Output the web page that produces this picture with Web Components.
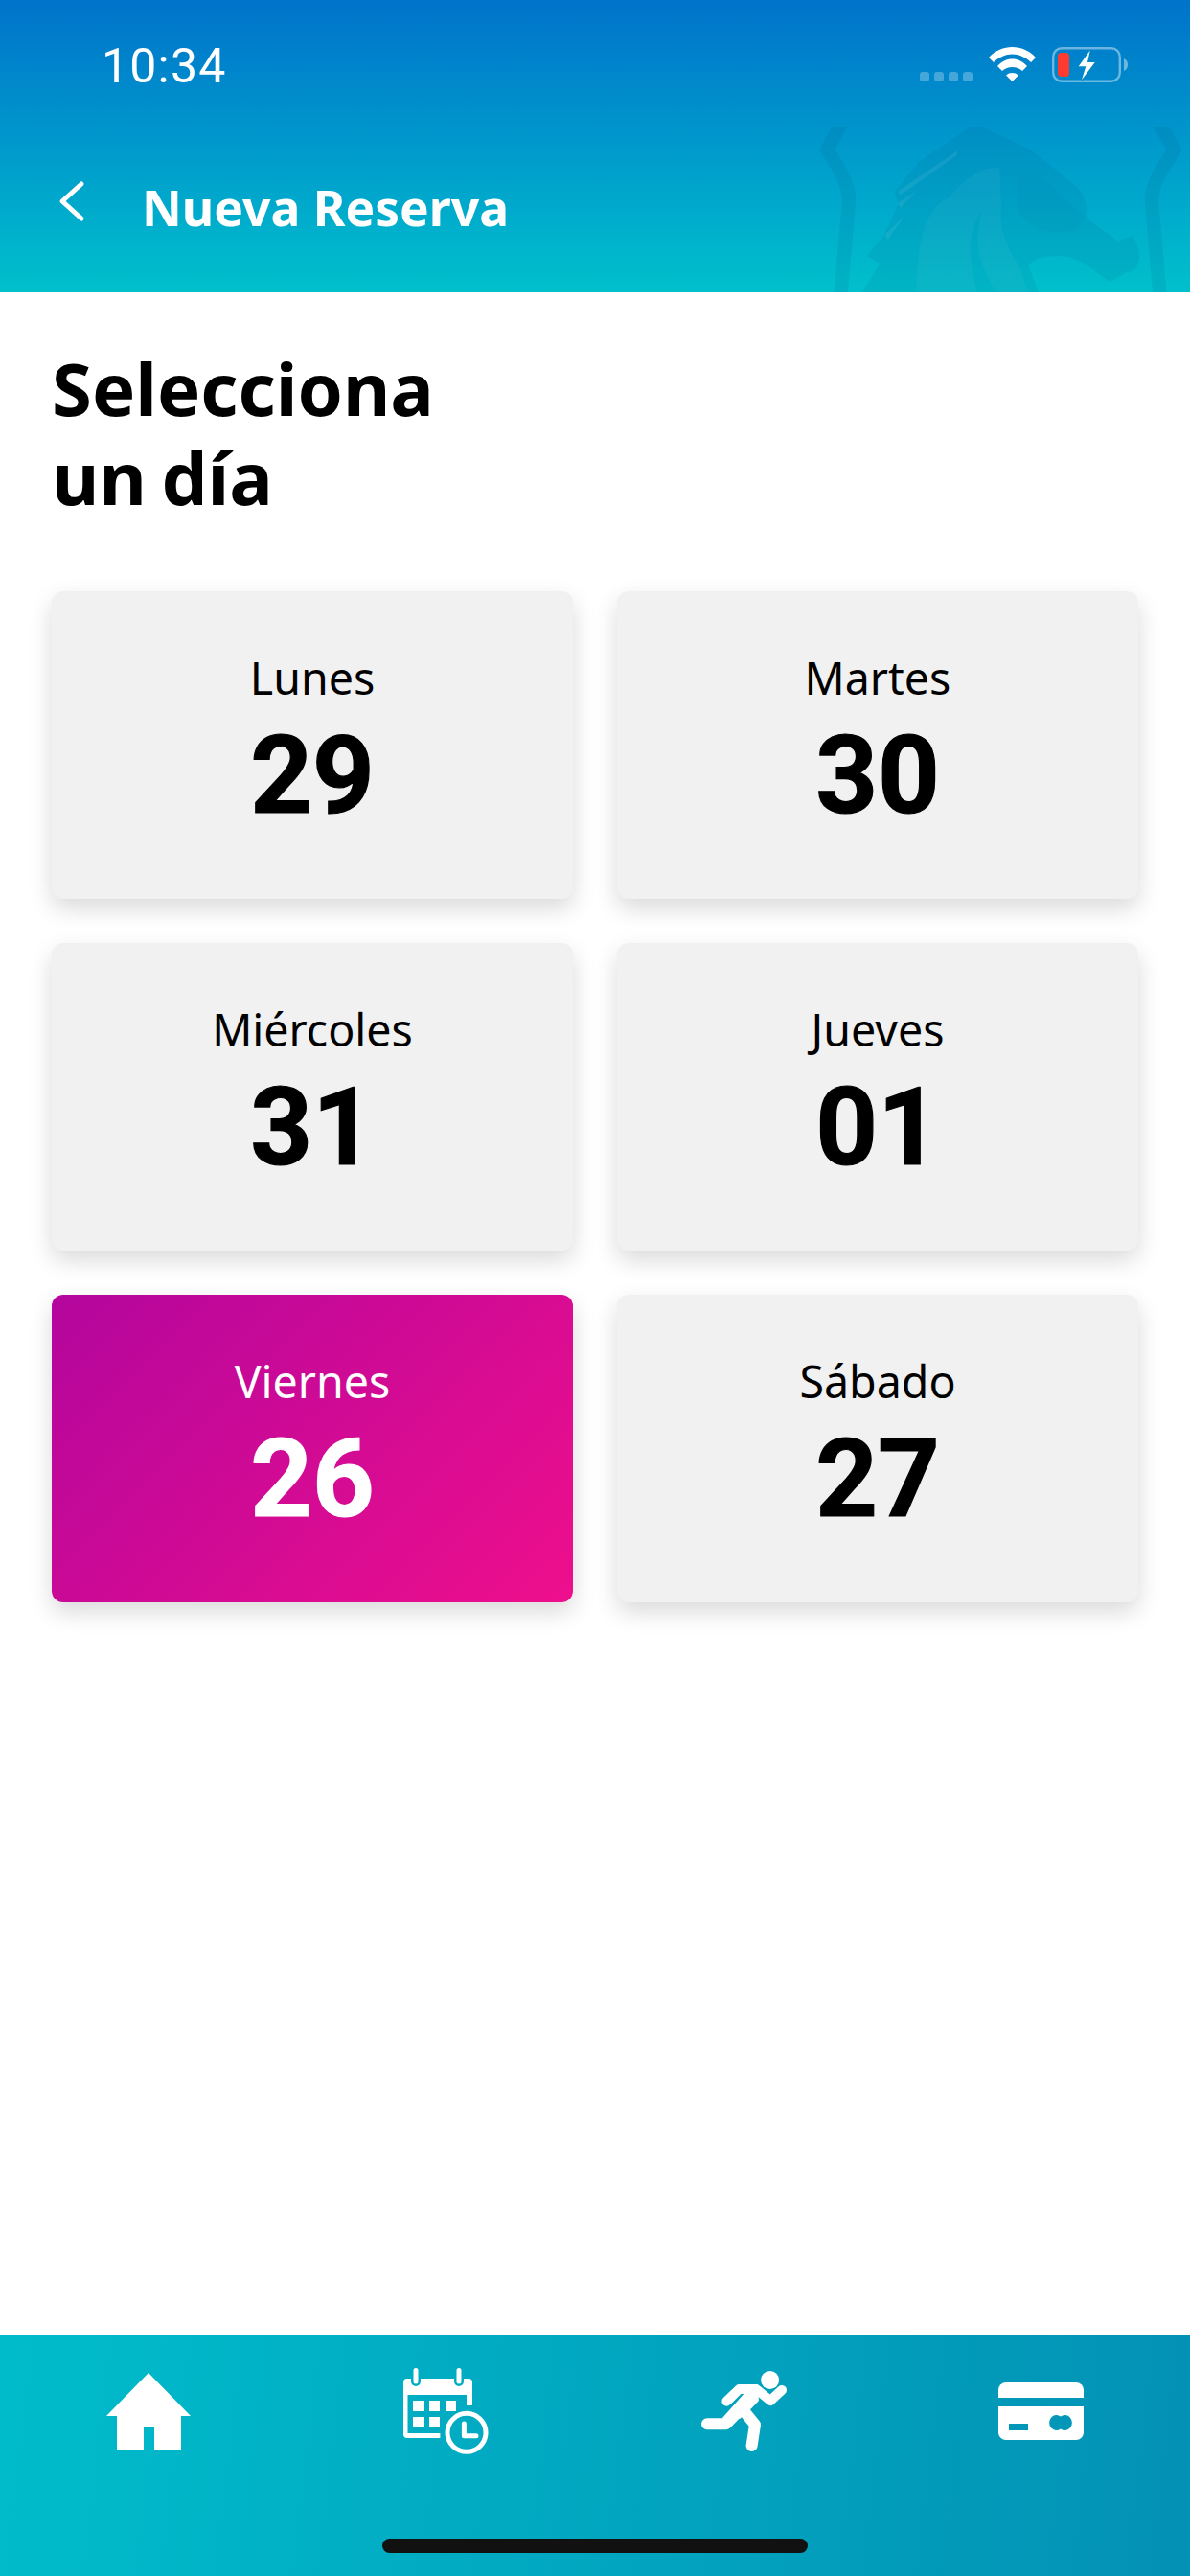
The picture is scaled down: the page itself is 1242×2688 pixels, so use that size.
<!DOCTYPE html>
<html lang="es">
<head>
<meta charset="utf-8">
<title>Nueva Reserva</title>
<style>
  html, body { margin: 0; padding: 0; background: #fff; }
  body { font-family: "Noto Sans", sans-serif; }
  app-screen { height: 2688px; }
</style>
</head>
<body>
<app-screen>
  <app-header slot="top" heading="Nueva Reserva"></app-header>
  <section-title>Selecciona<br>un día</section-title>
  <day-grid>
    <day-card><span slot="label">Lunes</span>29</day-card>
    <day-card><span slot="label">Martes</span>30</day-card>
    <day-card><span slot="label">Miércoles</span>31</day-card>
    <day-card><span slot="label">Jueves</span>01</day-card>
    <day-card selected><span slot="label">Viernes</span>26</day-card>
    <day-card><span slot="label">Sábado</span>27</day-card>
  </day-grid>
  <tab-bar slot="bottom"></tab-bar>
</app-screen>

<script>
class AppScreen extends HTMLElement {
  constructor() {
    super();
    this.attachShadow({ mode: "open" });
    this.shadowRoot.innerHTML = `
    <style>
      :host { display: flex; flex-direction: column; width: 1242px; background: #fff; }
      main { flex: 1; display: flex; flex-direction: column; }
    </style>
    <slot name="top"></slot>
    <main><slot></slot></main>
    <slot name="bottom"></slot>
  `;
  }
}

class StatusBar extends HTMLElement {
  constructor() {
    super();
    this.attachShadow({ mode: "open" });
    this.shadowRoot.innerHTML = `
    <style>
      :host { display: flex; align-items: flex-start; height: 132px; box-sizing: border-box; padding: 40px 65px 0 106px; color: #fff; }
      .time { font: 400 50px/58px Roboto, sans-serif; letter-spacing: 1.2px; }
      .right { margin-left: auto; display: flex; align-items: flex-start; padding-top: 9px; }
      .dots { display: flex; gap: 5px; margin: 26px 17px 0 0; }
      .dots i { width: 10px; height: 10px; border-radius: 3px; background: rgba(255,255,255,.27); }
      svg { display: block; }
      .wifi { margin-right: 17px; }
    </style>
    <span class="time">10:34</span>
    <div class="right">
      <div class="dots"><i></i><i></i><i></i><i></i></div>
      <svg class="wifi" width="49" height="36" viewBox="0 0 49 36" fill="#fff">
        <path d="M24.5 0C33.5 0 42 3.5 49 11L44 16C38 10.5 31.5 7.5 24.5 7.5C17.5 7.5 11 10.5 5 16L0 11C7 3.5 15.5 0 24.5 0Z"/>
        <path d="M24.5 12.5C30.5 12.5 35.5 15 40 20L35 25C32 22.5 28.5 21 24.5 21C20.5 21 17 22.5 14 25L9 20C13.5 15 18.5 12.5 24.5 12.5Z"/>
        <path d="M18 29.5C20 27.8 22 27 24.5 27C27 27 29 27.8 31 29.5L24.5 36Z"/>
      </svg>
      <svg width="79" height="37" viewBox="0 0 79 37">
        <rect x="1.2" y="1.2" width="69.6" height="34.6" rx="9" fill="none" stroke="#fff" stroke-opacity=".42" stroke-width="2.4"/>
        <path d="M75 12C77.5 13 79 15.5 79 18.5C79 21.5 77.5 24 75 25Z" fill="#fff" fill-opacity=".42"/>
        <rect x="6" y="6" width="12" height="25" rx="4" fill="#ff3b30"/>
        <path d="M39.7 3.7L27.7 20.3H35.3L31 34.3L44.7 16H37Z" fill="#fff" stroke="#0288c5" stroke-width="2.4" paint-order="stroke"/>
      </svg>
    </div>
  `;
  }
}

class HorseMark extends HTMLElement {
  constructor() {
    super();
    this.attachShadow({ mode: "open" });
    this.shadowRoot.innerHTML = `
    <style>
      :host { display: block; position: absolute; left: 780px; top: 0; width: 462px; height: 305px; pointer-events: none; }
      svg { display: block; }
    </style>
    <svg width="462" height="305" viewBox="0 0 1386 915">
      <defs>
        <clipPath id="band"><rect x="0" y="396" width="1386" height="519"/></clipPath>
      </defs>
      <g clip-path="url(#band)">
        <g fill="none" stroke="#005c86" stroke-opacity=".12" stroke-width="43" stroke-linejoin="round">
          <path d="M298 380L250 468C280 520 318 565 318 630L292 930"/>
          <path d="M1285 380L1338 468C1308 520 1266 565 1266 630L1292 930"/>
        </g>
        <path fill="#005c86" fill-opacity=".11" d="M700 396L540 505L460 600L472 640L425 740L375 800L415 825L360 915H912L880 830C900 805 950 795 1010 805C1060 820 1100 860 1130 880C1160 880 1170 850 1205 850C1230 830 1240 790 1205 738L1160 755L1060 680C1065 640 1060 610 1020 575C970 535 930 500 880 465L730 396Z"/>
        <g fill="#fff" fill-opacity=".07">
          <path d="M470 600L660 470L655 487L480 610Z"/>
          <path d="M470 635L530 598L480 650Z"/>
          <path d="M430 735L490 678L440 750Z"/>
        </g>
        <path fill="#fff" fill-opacity=".04" d="M530 915C525 780 560 640 630 620C680 560 730 520 790 525L795 640C790 700 800 760 850 830L880 915H780C740 850 700 780 735 660C690 720 690 800 720 915Z"/>
        <path fill="#005c86" fill-opacity=".05" d="M845 560C900 540 960 570 975 610L1060 680L1030 720C960 740 880 720 850 660Z"/>
      </g>
    </svg>
  `;
  }
}

class AppHeader extends HTMLElement {
  constructor() {
    super();
    this.attachShadow({ mode: "open" });
    this.shadowRoot.innerHTML = `
    <style>
      :host { display: block; position: relative; height: 305px; overflow: hidden; background: linear-gradient(180deg, #0073cb 0%, #00c0cc 100%); color: #fff; }
      nav { position: relative; display: flex; align-items: center; height: 70px; margin-top: 49px; padding-left: 60px; }
      svg { display: block; margin: 6px 58px 0 0; align-self: flex-start; }
      h1 { margin: 0; font: 700 51.5px/70px "Noto Sans", sans-serif; }
    </style>
    <horse-mark></horse-mark>
    <status-bar></status-bar>
    <nav>
      <svg width="30" height="46" viewBox="0 0 30 46" fill="none" stroke="#fff" stroke-width="5" stroke-linecap="round" stroke-linejoin="round">
        <path d="M25 5L5 23L25 41"/>
      </svg>
      <h1></h1>
    </nav>
  `;
    this.shadowRoot.querySelector("h1").textContent = this.getAttribute("heading") || "Nueva Reserva";
  }
}

class SectionTitle extends HTMLElement {
  constructor() {
    super();
    this.attachShadow({ mode: "open" });
    this.shadowRoot.innerHTML = `
    <style>
      :host { display: block; height: 312px; box-sizing: border-box; padding: 53px 0 0 54px; font: 700 76px/93px "Noto Sans", sans-serif; word-spacing: -4px; color: #000; }
    </style>
    <slot></slot>
  `;
  }
}

class DayGrid extends HTMLElement {
  constructor() {
    super();
    this.attachShadow({ mode: "open" });
    this.shadowRoot.innerHTML = `
    <style>
      :host { display: grid; grid-template-columns: 544px 544px; grid-auto-rows: 321px; gap: 46px; padding: 0 54px; }
    </style>
    <slot></slot>
  `;
  }
}

class DayCard extends HTMLElement {
  constructor() {
    super();
    this.attachShadow({ mode: "open" });
    this.shadowRoot.innerHTML = `
    <style>
      :host { display: flex; flex-direction: column; align-items: center; box-sizing: border-box; padding-top: 60px; border-radius: 12px; background: #f1f1f2; color: #000; box-shadow: 0 10px 24px rgba(0,0,0,.15); }
      :host([selected]) { background: linear-gradient(135deg, #b4069d 0%, #ee0f8c 100%); color: #fff; }
      .label { font: 400 46.5px/60px "Noto Sans", sans-serif; }
      .num { font: 700 113px/118px Roboto, sans-serif; margin-top: 14px; -webkit-text-stroke: 1.2px currentColor; }
    </style>
    <div class="label"><slot name="label"></slot></div>
    <div class="num"><slot></slot></div>
  `;
  }
}

class TabBar extends HTMLElement {
  constructor() {
    super();
    this.attachShadow({ mode: "open" });
    this.shadowRoot.innerHTML = `
    <style>
      :host { display: block; position: relative; height: 252px; background: linear-gradient(97deg, #00bccb 0%, #0391b5 100%); }
      .tabs { display: grid; grid-template-columns: repeat(4, 1fr); height: 160px; align-items: center; }
      .tabs > div { display: flex; justify-content: center; }
      svg { display: block; }
      .indicator { position: absolute; left: 399px; top: 213px; width: 444px; height: 15px; border-radius: 8px; background: #111; }
    </style>
    <div class="tabs">
      <div><svg width="88" height="80" viewBox="0 0 88 80" fill="#fff">
        <path d="M44 0L88 45H78V80H50V57H39V80H11V45H0Z"/>
      </svg></div>
      <div><svg width="89" height="90" viewBox="0 0 89 90">
        <path fill="#fff" d="M4 11H8V14A5 5 0 0 0 18 14V11H53V14A5 5 0 0 0 63 14V11H68A4 4 0 0 1 72 15V39H66V28H4.5V68H38.4V73H4A4 4 0 0 1 0 69V15A4 4 0 0 1 4 11Z"/>
        <path stroke="#fff" stroke-width="5" stroke-linecap="round" d="M13 2.5V14M58 2.5V14" fill="none"/>
        <path fill="#fff" d="M10 34H22V45H10ZM27 34H38V45H27ZM44 34H55V45H44ZM10 51H22V62H10ZM27 51H38V62H27Z"/>
        <circle cx="66" cy="67.3" r="20" fill="none" stroke="#fff" stroke-width="5"/>
        <path d="M63.4 58V70.7H76" fill="none" stroke="#fff" stroke-width="5" stroke-linecap="round" stroke-linejoin="round"/>
      </svg></div>
      <div><svg width="89" height="84" viewBox="0 0 89 84">
        <circle cx="71.6" cy="9.5" r="9.5" fill="#fff"/>
        <path fill="#fff" d="M38.7 14H58.5L60 31L50.6 40.7L40 50L21.7 49.3L44 24.3Z"/>
        <g fill="none" stroke="#fff" stroke-linecap="round" stroke-linejoin="round">
          <path stroke-width="10" d="M26.4 31.7L39.5 19H57.3L72 31L84 20"/>
          <path stroke-width="12" d="M6 55.3H25.6L45.4 35"/>
          <path stroke-width="12" d="M45.4 43L56 56L52.6 78"/>
        </g>
      </svg></div>
      <div><svg width="89" height="60" viewBox="0 0 89 60" fill="#fff">
        <path d="M8 0H81A8 8 0 0 1 89 8V16H0V8A8 8 0 0 1 8 0Z"/>
        <path fill-rule="evenodd" d="M0 25H89V52A8 8 0 0 1 81 60H8A8 8 0 0 1 0 52ZM11 43V50H31V43ZM65 35.5A7.5 8 0 1 0 65 48.5A7.5 8 0 1 0 65 35.5Z"/>
      </svg></div>
    </div>
    <div class="indicator"></div>
  `;
  }
}

customElements.define("status-bar", StatusBar);
customElements.define("horse-mark", HorseMark);
customElements.define("app-header", AppHeader);
customElements.define("section-title", SectionTitle);
customElements.define("day-grid", DayGrid);
customElements.define("day-card", DayCard);
customElements.define("tab-bar", TabBar);
customElements.define("app-screen", AppScreen);
</script>
</body>
</html>
